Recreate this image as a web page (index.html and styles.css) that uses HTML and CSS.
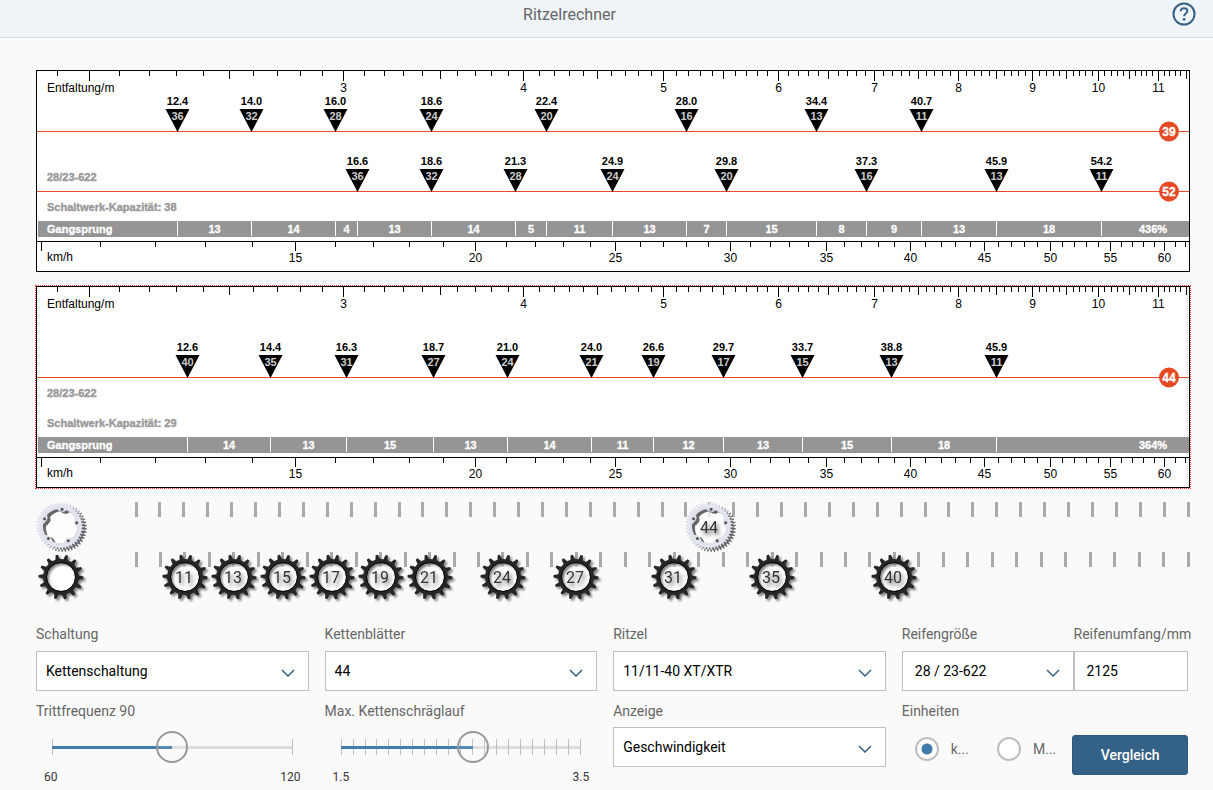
FILE: index.html
```
<!DOCTYPE html>
<html lang="de">
<head>
  <meta charset="UTF-8">
  <meta name="viewport" content="width=device-width, initial-scale=1.0">
  <title>Ritzelrechner</title>
  <link rel="stylesheet" href="styles.css">
</head>
<body>
  <header class="header">
    <h1 class="title">Ritzelrechner</h1>
    <button class="help" type="button" aria-label="Hilfe">
      <svg width="24" height="24" viewBox="0 0 24 24" fill="none" stroke="#346187" stroke-width="2">
        <circle cx="12" cy="12" r="10.5" />
        <path d="M8.7 9.3c0-1.9 1.4-3 3.4-3s3.3 1.1 3.3 2.8c0 2.4-3.3 2.4-3.3 5.1" />
        <circle cx="12.1" cy="17.3" r="1.4" fill="#346187" stroke="none" />
      </svg>
    </button>
  </header>

  <main class="page">
    <section class="charts">
      <svg class="chart" id="chart1"></svg>
      <svg class="chart active" id="chart2"></svg>
    </section>

    <section class="gears">
      <div class="gear-row">
        <svg class="gear-icon" id="ringIcon"></svg>
        <svg class="gear-track" id="rings"></svg>
      </div>
      <div class="gear-row">
        <svg class="gear-icon" id="sprocketIcon"></svg>
        <svg class="gear-track" id="sprockets"></svg>
      </div>
    </section>

    <form class="controls">
      <div class="field">
        <label for="schaltung">Schaltung</label>
        <div class="select">
          <select id="schaltung"><option>Kettenschaltung</option></select>
          <svg class="chevron" width="14" height="8" viewBox="0 0 14 8"><path d="M1 1l6 6 6-6" /></svg>
        </div>
      </div>
      <div class="field">
        <label for="kettenblaetter">Kettenblätter</label>
        <div class="select">
          <select id="kettenblaetter"><option>44</option></select>
          <svg class="chevron" width="14" height="8" viewBox="0 0 14 8"><path d="M1 1l6 6 6-6" /></svg>
        </div>
      </div>
      <div class="field">
        <label for="ritzel">Ritzel</label>
        <div class="select">
          <select id="ritzel"><option>11/11-40 XT/XTR</option></select>
          <svg class="chevron" width="14" height="8" viewBox="0 0 14 8"><path d="M1 1l6 6 6-6" /></svg>
        </div>
      </div>
      <div class="pair">
        <div class="field wide">
          <label for="reifen">Reifengröße</label>
          <div class="select indent">
            <select id="reifen"><option>28 / 23-622</option></select>
            <svg class="chevron" width="14" height="8" viewBox="0 0 14 8"><path d="M1 1l6 6 6-6" /></svg>
          </div>
        </div>
        <div class="field narrow">
          <label for="umfang">Reifenumfang/mm</label>
          <input class="text" id="umfang" type="text" value="2125">
        </div>
      </div>

      <div class="field">
        <label for="frequenz">Trittfrequenz 90</label>
        <div class="slider" data-steps="1">
          <div class="slider-track"><div class="slider-fill"></div></div>
          <input id="frequenz" type="range" min="60" max="120" value="90">
        </div>
        <div class="limits"><span>60</span><span>120</span></div>
      </div>
      <div class="field">
        <label for="schraeglauf">Max. Kettenschräglauf</label>
        <div class="slider" data-steps="20">
          <div class="slider-track"><div class="slider-fill"></div></div>
          <input id="schraeglauf" type="range" min="1.5" max="3.5" step="0.1" value="2.6">
        </div>
        <div class="limits"><span>1.5</span><span>3.5</span></div>
      </div>
      <div class="field">
        <label for="anzeige">Anzeige</label>
        <div class="select">
          <select id="anzeige"><option>Geschwindigkeit</option></select>
          <svg class="chevron" width="14" height="8" viewBox="0 0 14 8"><path d="M1 1l6 6 6-6" /></svg>
        </div>
      </div>
      <div class="pair">
        <fieldset class="units wide">
          <legend>Einheiten</legend>
          <div class="radios">
            <label class="radio"><input type="radio" name="einheit" checked> k...</label>
            <label class="radio"><input type="radio" name="einheit"> M...</label>
          </div>
        </fieldset>
        <button class="compare narrow" type="button">Vergleich</button>
      </div>
    </form>
  </main>

  <script src="script.js"></script>
</body>
</html>
```
FILE: styles.css
```
* {
  box-sizing: border-box;
}

body {
  margin: 0;
  background-color: #fafafa;
  color: #666;
  font-family: Roboto, 'Open Sans', sans-serif;
  font-size: 14px;
}

.header {
  display: flex;
  align-items: flex-start;
  height: 38px;
  padding-right: 17px;
  background-color: #eff4f8;
  border-bottom: 1px solid #cfdcea;
}

.title {
  flex: 1;
  margin: 0;
  font-size: 16px;
  font-weight: 400;
  line-height: 30px;
  text-align: center;
}

.help {
  margin: 2px 0 0 33px;
  padding: 0;
  width: 24px;
  height: 24px;
  border: none;
  background: none;
  cursor: pointer;
}

.page {
  padding: 32px 23px 0 36px;
}

/* Charts */
.charts {
  display: flex;
  flex-direction: column;
  gap: 14px;
}

.chart {
  display: block;
  width: 100%;
  height: 202px;
  background-color: #fff;
  border: 1px solid #000;
  font-family: 'Liberation Sans', Arial, sans-serif;
  font-size: 12px;
}

.chart.active {
  outline: 1px dotted #f33;
}

.axis {
  stroke: #000;
  stroke-width: 1;
  shape-rendering: crispEdges;
}

.row-line {
  stroke: #e64a25;
  shape-rendering: crispEdges;
}

.middle {
  text-anchor: middle;
}

.bold {
  font-size: 11px;
  font-weight: bold;
}

.cog {
  fill: #ccc;
}

.info {
  fill: #999;
  stroke: #999;
  stroke-width: 0.4px;
}

.bar {
  fill: #959595;
}

.divider {
  stroke: #fff;
  shape-rendering: crispEdges;
}

.white {
  fill: #fff;
  stroke: #fff;
  stroke-width: 0.3px;
}

.badge {
  fill: #e64a25;
}

.badge-text {
  font-size: 12px;
  font-weight: bold;
}

/* Gears */
.gears {
  padding-top: 14px;
}

.gear-row {
  display: flex;
}

.gear-icon {
  width: 50px;
  height: 50px;
  overflow: visible;
}

.gear-track {
  flex: 1;
  min-width: 0;
  height: 50px;
  overflow: visible;
  font-size: 16px;
}

.gear-tick {
  fill: #aaa;
}

.gear-shape {
  filter: drop-shadow(2px 2px 1px rgba(0, 0, 0, 0.5));
}

.ring-shape {
  filter: drop-shadow(3px 2px 0 rgba(0, 0, 0, 0.6));
}

.gear-text {
  fill: #333;
  text-anchor: middle;
  filter: drop-shadow(2px 3px 2px rgba(0, 0, 0, 0.6));
}

/* Controls */
.controls {
  display: grid;
  grid-template-columns: 20fr 20fr 20fr 21fr;
  column-gap: 16px;
  row-gap: 8px;
  margin-right: 2px;
  padding-top: 20px;
}

.field {
  min-width: 0;
}

.field > label,
legend {
  display: block;
  padding: 0;
  height: 29px;
  line-height: 24px;
  white-space: nowrap;
}

.controls > .field:nth-child(n + 5) > label,
legend {
  height: 28px;
}

.pair {
  display: flex;
}

.wide {
  flex: 3;
}

.narrow {
  flex: 2;
}

.select {
  position: relative;
}

select,
.text {
  display: block;
  width: 100%;
  height: 40px;
  margin: 0;
  padding: 0 9px;
  border: 1px solid #bfbfbf;
  border-radius: 0;
  background-color: #fff;
  color: #000;
  font-family: inherit;
  font-size: 14px;
  appearance: none;
}

.indent select,
.text {
  padding: 0 12px;
}

.chevron {
  position: absolute;
  right: 14px;
  top: 18px;
  fill: none;
  stroke: #346187;
  stroke-width: 1.5;
  pointer-events: none;
}

.slider {
  position: relative;
  height: 40px;
}

.slider-track {
  position: absolute;
  left: 16px;
  right: 16px;
  top: 12px;
  height: 16px;
  display: flex;
  justify-content: space-between;
  background: linear-gradient(#ddd, #ddd) center / 100% 3px no-repeat;
}

.slider-fill {
  position: absolute;
  left: 0;
  top: 7px;
  height: 3px;
  background-color: #427cac;
}

.slider-tick {
  width: 1px;
  background-color: #bfbfbf;
}

.slider input {
  position: absolute;
  left: 0;
  top: 4px;
  width: 100%;
  height: 32px;
  margin: 0;
  background: none;
  appearance: none;
}

.slider input::-webkit-slider-thumb {
  width: 32px;
  height: 32px;
  border: 2px solid #999;
  border-radius: 50%;
  background-color: rgba(255, 255, 255, 0.1);
  appearance: none;
}

.limits {
  display: flex;
  justify-content: space-between;
  padding: 2px 8px 0 8px;
  color: #333;
  font-size: 12px;
  line-height: 16px;
}

.units {
  margin: 0;
  padding: 0;
  border: none;
  min-width: 0;
}

.radios {
  display: flex;
  gap: 28px;
  padding: 10px 0 0 13px;
}

.radio {
  display: flex;
  align-items: center;
  gap: 12px;
}

.radio input {
  width: 24px;
  height: 24px;
  margin: 0;
  border: 2px solid #bfbfbf;
  border-radius: 50%;
  background-color: #fff;
  appearance: none;
}

.radio input:checked {
  background-image: radial-gradient(circle, #427cac 5px, #fff 6px);
}

.compare {
  min-width: 0;
  height: 40px;
  margin-top: 36px;
  padding: 0;
  border: 1px solid #2f597c;
  border-radius: 3px;
  background-color: #346187;
  color: #fff;
  font-family: inherit;
  font-size: 14px;
  font-weight: 500;
  cursor: pointer;
}

.compare:hover {
  background-color: #2c5373;
}
```
FILE: script.js
```
const NS = 'http://www.w3.org/2000/svg';
const CIRCUMFERENCE = 2.125;
const CADENCE = 90;

const setups = [
  { id: 'chart1', rings: [39, 52], cogs: [36, 32, 28, 24, 20, 16, 13, 11], capacity: 38 },
  { id: 'chart2', rings: [44], cogs: [40, 35, 31, 27, 24, 21, 19, 17, 15, 13, 11], capacity: 29 }
];

function add(parent, name, attrs, text) {
  const el = document.createElementNS(NS, name);
  for (const key in attrs) {
    el.setAttribute(key, attrs[key]);
  }
  if (text !== undefined) {
    el.textContent = text;
  }
  parent.appendChild(el);
  return el;
}

function line(svg, x1, y1, x2, y2, cls) {
  add(svg, 'line', { x1: x1, y1: y1, x2: x2, y2: y2, class: cls });
}

function drawChart(setup) {
  const svg = document.getElementById(setup.id);
  svg.innerHTML = '';
  const width = svg.getBoundingClientRect().width - 2;

  // logarithmic scale, development in metres from 1.84 to 11.55
  const scale = width / Math.log(11.55 / 1.84);
  const xMetres = m => Math.floor(scale * Math.log(m / 1.84)) + 0.5;
  const xRatio = r => xMetres(r * CIRCUMFERENCE);
  const speed = r => r * CIRCUMFERENCE * CADENCE * 0.06;
  const xSpeed = v => xMetres(v / (CADENCE * 0.06));

  // upper axis
  for (let i = 19; i <= 115; i++) {
    const x = xMetres(i / 10);
    line(svg, x, 0, x, i % 10 === 0 ? 10 : i % 5 === 0 ? 8 : 5, 'axis');
    if (i % 10 === 0 && i > 20) {
      add(svg, 'text', { x: x, y: 21, class: 'middle' }, i / 10);
    }
  }
  add(svg, 'text', { x: 10, y: 21 }, 'Entfaltung/m');

  // one line for each chainring
  const ratios = [];
  setup.rings.forEach((ring, i) => {
    const y = setup.rings.length === 1 ? 90 : 60 + i * 60;
    line(svg, 0, y + 0.5, width, y + 0.5, 'row-line');
    setup.cogs.forEach(cog => {
      const ratio = ring / cog;
      const x = xRatio(ratio);
      ratios.push(ratio);
      add(svg, 'path', { d: `M${x - 12} ${y - 22}h24l-12 23z` });
      add(svg, 'text', { x: x, y: y - 26, class: 'middle bold' }, speed(ratio).toFixed(1));
      add(svg, 'text', { x: x, y: y - 11, class: 'middle bold cog' }, cog);
    });
    add(svg, 'circle', { cx: width - 20, cy: y + 0.5, r: 10, class: 'badge' });
    add(svg, 'text', { x: width - 20, y: y + 5, class: 'middle badge-text white' }, ring);
  });

  add(svg, 'text', { x: 10, y: 110, class: 'bold info' }, '28/23-622');
  add(svg, 'text', { x: 10, y: 140, class: 'bold info' }, 'Schaltwerk-Kapazität: ' + setup.capacity);

  // steps between the gears in percent
  add(svg, 'rect', { x: 1, y: 150, width: width - 1, height: 16, class: 'bar' });
  add(svg, 'text', { x: 10, y: 162, class: 'bold white' }, 'Gangsprung');
  const sorted = [...new Set(ratios)].sort((a, b) => a - b);
  sorted.forEach((ratio, i) => {
    const x = xRatio(ratio);
    line(svg, x, 150, x, 165, 'divider');
    if (i > 0) {
      const step = Math.round((ratio / sorted[i - 1] - 1) * 100 + 0.0001);
      add(svg, 'text', { x: (x + xRatio(sorted[i - 1])) / 2, y: 162, class: 'middle bold white' }, step);
    }
  });
  const range = Math.round(sorted[sorted.length - 1] / sorted[0] * 100);
  add(svg, 'text', { x: width - 36, y: 162, class: 'middle bold white' }, range + '%');

  // lower axis
  line(svg, 0, 170.5, width, 170.5, 'axis');
  for (let v = 10; v <= 62; v++) {
    const x = xSpeed(v);
    line(svg, x, 171, x, v % 5 === 0 ? 180 : 176, 'axis');
    if (v % 5 === 0 && v > 10) {
      add(svg, 'text', { x: x, y: 191, class: 'middle' }, v);
    }
  }
  add(svg, 'text', { x: 10, y: 190 }, 'km/h');
}

function polar(r, deg) {
  const a = deg * Math.PI / 180;
  return (r * Math.cos(a)).toFixed(2) + ' ' + (r * Math.sin(a)).toFixed(2);
}

// closed outline with the given number of teeth
function teeth(count, root, tip, rootWidth, tipWidth) {
  const points = [];
  for (let i = 0; i < count; i++) {
    const a = i * 360 / count + 2;
    points.push(polar(root, a - rootWidth), polar(tip, a - tipWidth), polar(tip, a + tipWidth), polar(root, a + rootWidth));
  }
  return 'M' + points.join('L') + 'z';
}

function drawSprocket(svg, x, label) {
  const g = add(svg, 'g', { transform: `translate(${x} 25)` });
  add(g, 'circle', { r: 14, fill: '#fff', 'fill-opacity': label ? 0.5 : 1 });
  add(g, 'path', {
    d: teeth(14, 18, 22.5, 7, 3) + 'M14 0A14 14 0 1 0 -14 0A14 14 0 1 0 14 0z',
    fill: '#262626', 'fill-rule': 'evenodd', class: 'gear-shape'
  });
  add(g, 'circle', { r: 14.5, fill: 'none', stroke: '#080808', 'stroke-width': 1 });
  if (label) {
    add(g, 'text', { x: -1, y: 6, class: 'gear-text' }, label);
  }
}

function drawRing(svg, x, label) {
  const g = add(svg, 'g', { transform: `translate(${x - 1} 24)` });
  const inner = [];
  for (let a = 0; a < 360; a += 4) {
    // the hole narrows at the five bolts
    const d = Math.abs(((a + 83 + 36) % 72) - 36);
    inner.push(polar(d < 9 ? 14.5 : d < 15 ? 15.5 : 17, a));
  }
  add(g, 'circle', { r: 18, fill: '#fff', 'fill-opacity': 0.7 });
  add(g, 'path', {
    d: teeth(44, 21.5, 24, 3, 1) + 'M' + inner.join('L') + 'z',
    fill: '#dfe1ec', 'fill-rule': 'evenodd', class: 'ring-shape'
  });
  add(g, 'circle', { r: 20.5, fill: 'none', stroke: '#ebedf5', 'stroke-width': 1 });
  for (let i = 0; i < 5; i++) {
    const p = polar(17, -83 + i * 72).split(' ');
    add(g, 'circle', { cx: p[0], cy: p[1], r: 1.5, fill: '#555' });
  }
  if (label) {
    add(g, 'text', { x: 0, y: 7, class: 'gear-text' }, label);
  }
}

function drawTrack(id, min, max, values, draw) {
  const svg = document.getElementById(id);
  svg.innerHTML = '';
  const start = 50.5;
  const step = (svg.getBoundingClientRect().width - 1.5 - start) / (max - min);
  for (let i = 0; i <= max - min; i++) {
    add(svg, 'rect', { x: Math.floor(start + i * step - 1.5), y: 0, width: 3, height: 15, class: 'gear-tick' });
  }
  values.forEach(v => draw(svg, Math.floor(start + (v - min) * step), v));
}

function updateSlider(slider) {
  const input = slider.querySelector('input');
  const part = (input.value - input.min) / (input.max - input.min);
  slider.querySelector('.slider-fill').style.width = part * 100 + '%';
}

function drawAll() {
  setups.forEach(drawChart);
  drawTrack('rings', 20, 64, [44], drawRing);
  drawTrack('sprockets', 9, 52, [11, 13, 15, 17, 19, 21, 24, 27, 31, 35, 40], drawSprocket);
}

document.querySelectorAll('.slider').forEach(slider => {
  const track = slider.querySelector('.slider-track');
  for (let i = 0; i <= Number(slider.dataset.steps); i++) {
    const tick = document.createElement('span');
    tick.className = 'slider-tick';
    track.appendChild(tick);
  }
  slider.querySelector('input').addEventListener('input', () => updateSlider(slider));
  updateSlider(slider);
});

drawRing(document.getElementById('ringIcon'), 25);
drawSprocket(document.getElementById('sprocketIcon'), 25);
drawAll();
window.addEventListener('resize', drawAll);
```
